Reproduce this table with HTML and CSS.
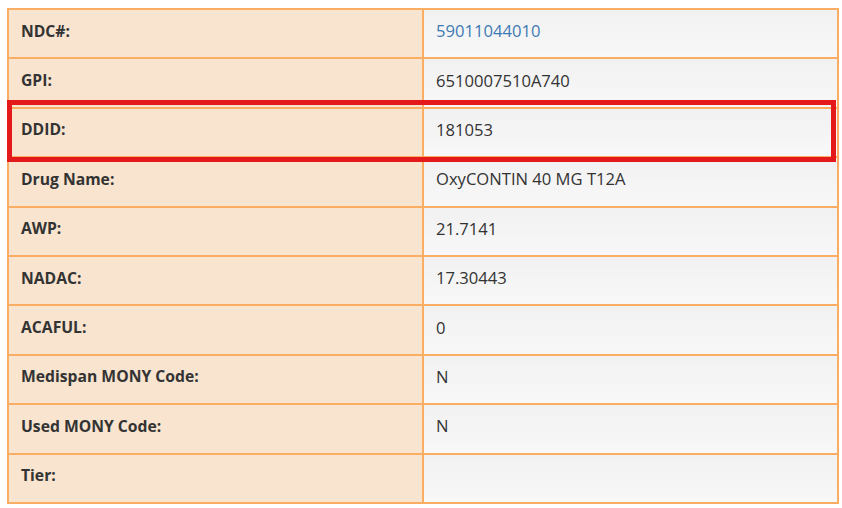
FILE: index.html
```html
<!DOCTYPE html>
<html>
<head>
<meta charset="utf-8">
<link rel="stylesheet" href="styles.css">
</head>
<body>
<div class="wrap">
<table class="info">
  <tr><th>NDC#:</th><td><a class="link" href="#">59011044010</a></td></tr>
  <tr><th>GPI:</th><td>6510007510A740</td></tr>
  <tr class="hl"><th>DDID:</th><td>181053</td></tr>
  <tr><th>Drug Name:</th><td>OxyCONTIN 40 MG T12A</td></tr>
  <tr><th>AWP:</th><td>21.7141</td></tr>
  <tr><th>NADAC:</th><td>17.30443</td></tr>
  <tr><th>ACAFUL:</th><td>0</td></tr>
  <tr><th>Medispan MONY Code:</th><td>N</td></tr>
  <tr><th>Used MONY Code:</th><td>N</td></tr>
  <tr><th>Tier:</th><td></td></tr>
</table>
<div class="mark"></div>
</div>
</body>
</html>
```
FILE: styles.css
```css
html, body { margin: 0; padding: 0; background: #ffffff; }
body { font-family: "Open Sans", "Liberation Sans", sans-serif; }
.wrap { position: relative; padding: 8px 0 0 7px; width: 832px; }
.info {
  border-collapse: collapse;
  width: 832px;
  table-layout: fixed;
  color: #333333;
}
.info tr { height: 49.4px; }
.info th, .info td {
  border: 2px solid #fcad64;
  text-align: left;
  vertical-align: middle;
  padding: 0 12px 6px 12px;
}
.info th {
  width: 389px;
  font-weight: 700;
  font-size: 15.7px;
  background: #f8e4cf;
}
.info td {
  font-size: 16.6px;
  background: linear-gradient(#f1f1f1, #f8f8f8);
}
.link { color: #3f7ab4; text-decoration: none; }
.mark {
  position: absolute;
  left: 7px;
  top: 100px;
  width: 819px;
  height: 52px;
  border: 5px solid #e3191b;
}
```
